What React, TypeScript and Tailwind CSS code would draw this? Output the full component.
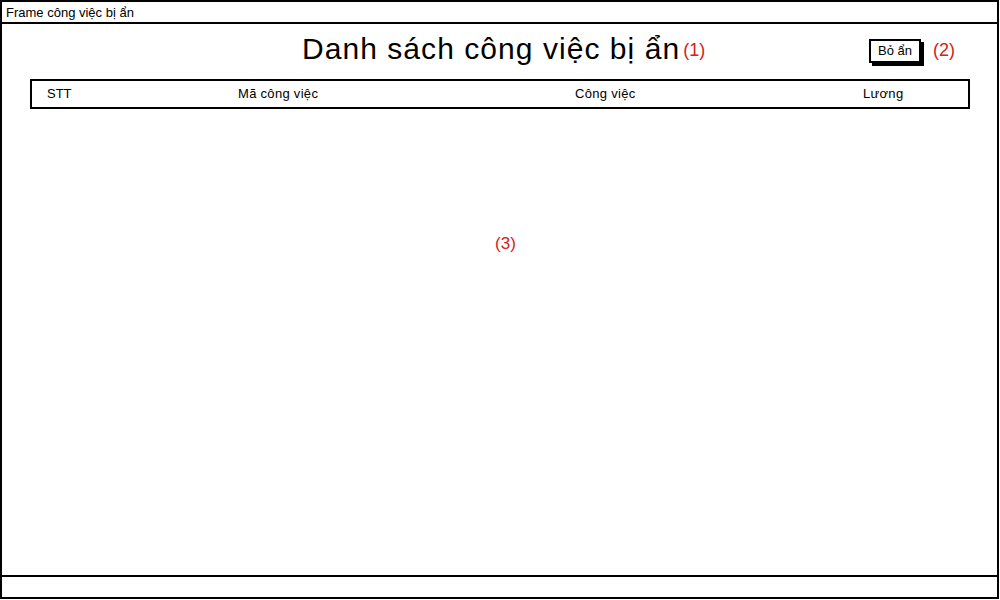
import React from "react";

export default function App() {
  const font = { fontFamily: '"Liberation Sans", Arial, sans-serif' };
  return (
    <div className="w-[1000px] h-[600px] bg-white relative overflow-hidden" style={font}>
      <div className="absolute left-0 top-0 w-[999px] h-[599px] border-2 border-black flex flex-col">
        <div className="h-[22px] border-b-2 border-black flex items-center pl-[4px] text-[13px] text-black leading-none">
          Frame công việc bị ẩn
        </div>
        <div className="flex-1 flex flex-col">
          <div className="h-[55px] relative flex items-center">
            <div className="absolute left-[300px] top-[10px] flex items-center">
              <span className="text-[30px] text-black leading-none tracking-[1.05px]">Danh sách công việc bị ẩn</span>
              <span className="text-[18px] text-[#d42020] leading-none ml-[3px] mt-[2px]">(1)</span>
            </div>
            <div className="absolute left-[867px] top-[14px] flex items-center">
              <div className="w-[52px] h-[24px] border-2 border-black shadow-[3px_3px_0_#000] flex items-center justify-center text-[13px] text-black">
                Bỏ ẩn
              </div>
              <span className="ml-[12px] text-[18px] text-[#d42020] -mt-[1px]">(2)</span>
            </div>
          </div>
          <div className="ml-[28px] mr-[27px] h-[30px] border-2 border-black flex items-center text-[13px] text-black">
            <div className="w-[206px] pl-[15px]">STT</div>
            <div className="w-[337px] tracking-[0.3px]">Mã công việc</div>
            <div className="w-[288px] tracking-[0.3px]">Công việc</div>
            <div className="tracking-[0.3px]">Lương</div>
          </div>
          <div className="flex-1 flex justify-center pt-[122px]">
            <span className="text-[17px] text-[#d42020] ml-[12px]">(3)</span>
          </div>
        </div>
        <div className="h-[22px] border-t-2 border-black"></div>
      </div>
    </div>
  );
}
